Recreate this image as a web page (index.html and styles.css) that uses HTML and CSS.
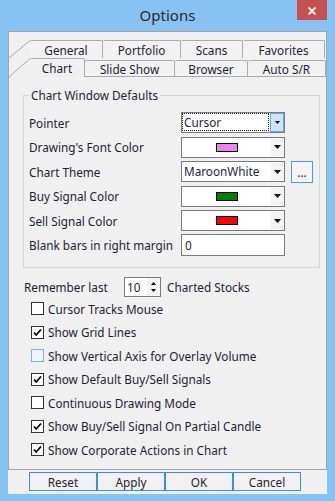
FILE: index.html
```html
<!DOCTYPE html>
<html>
<head>
<meta charset="utf-8">
<link rel="stylesheet" href="styles.css">
</head>
<body>
<div class="win">
  <div class="titlebar">
    <span class="title">Options</span>
    <div class="close"><svg width="8" height="8" viewBox="0 0 8 8"><path d="M0.5 0.5L7.5 7.5M7.5 0.5L0.5 7.5" stroke="#fff" stroke-width="1.8"/></svg></div>
  </div>
  <div class="client">
    <div class="tabctl">
      <div class="tabrow back">
        <svg class="slant" width="21" height="18" viewBox="0 0 21 18"><path d="M0 18L21 0.5" stroke="#acacac" stroke-width="1" fill="none"/></svg>
        <div class="tab w-general">General</div>
        <div class="tab w-portfolio">Portfolio</div>
        <div class="tab w-scans">Scans</div>
        <div class="tab w-fav">Favorites</div>
      </div>
      <div class="tabrow front">
        <svg class="slant" width="21" height="19" viewBox="0 0 21 19"><path d="M0 19L21 0.5" stroke="#acacac" stroke-width="1" fill="none"/></svg>
        <div class="tab sel w-chart">Chart</div>
        <div class="tab w-slide">Slide Show</div>
        <div class="tab w-browser">Browser</div>
        <div class="tab w-auto">Auto S/R</div>
      </div>
      <div class="page">
        <fieldset class="group">
          <legend>Chart Window Defaults</legend>
          <div class="rows">
            <div class="frow">
              <span class="lbl">Pointer</span>
              <div class="combo">
                <span class="focus">Cursor</span>
                <span class="dd-btn"><svg width="5" height="3" viewBox="0 0 5 3"><path d="M0 0H5L2.5 3Z" fill="#000"/></svg></span>
              </div>
            </div>
            <div class="frow">
              <span class="lbl">Drawing's Font Color</span>
              <div class="combo">
                <span class="swarea"><span class="swatch pink"></span></span>
                <span class="arrow"><svg width="7" height="4" viewBox="0 0 7 4"><path d="M0 0H7L3.5 4Z" fill="#000"/></svg></span>
              </div>
            </div>
            <div class="frow">
              <span class="lbl">Chart Theme</span>
              <div class="combo">
                <span class="ctext">MaroonWhite</span>
                <span class="arrow"><svg width="7" height="4" viewBox="0 0 7 4"><path d="M0 0H7L3.5 4Z" fill="#000"/></svg></span>
              </div>
              <div class="dots">...</div>
            </div>
            <div class="frow">
              <span class="lbl">Buy Signal Color</span>
              <div class="combo">
                <span class="swarea"><span class="swatch green"></span></span>
                <span class="arrow"><svg width="7" height="4" viewBox="0 0 7 4"><path d="M0 0H7L3.5 4Z" fill="#000"/></svg></span>
              </div>
            </div>
            <div class="frow">
              <span class="lbl">Sell Signal Color</span>
              <div class="combo">
                <span class="swarea"><span class="swatch red"></span></span>
                <span class="arrow"><svg width="7" height="4" viewBox="0 0 7 4"><path d="M0 0H7L3.5 4Z" fill="#000"/></svg></span>
              </div>
            </div>
            <div class="frow">
              <span class="lbl">Blank bars in right margin</span>
              <div class="textbox">0</div>
            </div>
          </div>
        </fieldset>
        <div class="remember">
          <span class="rlbl">Remember last</span>
          <div class="spin">
            <span class="spintext">10</span>
            <span class="spinbtns">
              <svg width="5" height="3" viewBox="0 0 5 3"><path d="M0 3H5L2.5 0Z" fill="#000"/></svg>
              <svg width="5" height="3" viewBox="0 0 5 3"><path d="M0 0H5L2.5 3Z" fill="#000"/></svg>
            </span>
          </div>
          <span class="after">Charted Stocks</span>
        </div>
        <div class="checks">
          <div class="chk"><span class="box"></span>Cursor Tracks Mouse</div>
          <div class="chk"><span class="box"><svg width="11" height="11" viewBox="0 0 11 11"><path d="M2 5.5L4.2 8L9 2.5" stroke="#000" stroke-width="1.8" fill="none"/></svg></span>Show Grid Lines</div>
          <div class="chk"><span class="box hover"></span>Show Vertical Axis for Overlay Volume</div>
          <div class="chk"><span class="box"><svg width="11" height="11" viewBox="0 0 11 11"><path d="M2 5.5L4.2 8L9 2.5" stroke="#000" stroke-width="1.8" fill="none"/></svg></span>Show Default Buy/Sell Signals</div>
          <div class="chk"><span class="box"></span>Continuous Drawing Mode</div>
          <div class="chk"><span class="box"><svg width="11" height="11" viewBox="0 0 11 11"><path d="M2 5.5L4.2 8L9 2.5" stroke="#000" stroke-width="1.8" fill="none"/></svg></span>Show Buy/Sell Signal On Partial Candle</div>
          <div class="chk"><span class="box"><svg width="11" height="11" viewBox="0 0 11 11"><path d="M2 5.5L4.2 8L9 2.5" stroke="#000" stroke-width="1.8" fill="none"/></svg></span>Show Corporate Actions in Chart</div>
        </div>
      </div>
    </div>
    <div class="buttons">
      <div class="btn">Reset</div>
      <div class="btn">Apply</div>
      <div class="btn">OK</div>
      <div class="btn">Cancel</div>
    </div>
  </div>
</div>
</body>
</html>
```

FILE: styles.css
```css
* { box-sizing: border-box; }
body {
  margin: 0;
  width: 335px;
  height: 501px;
  overflow: hidden;
  background: #88c2f3;
  font-family: "Noto Sans", "Open Sans", sans-serif;
  font-size: 11.75px;
  color: #1e1e34;
}
.win { width: 335px; height: 501px; display: flex; flex-direction: column; }
.titlebar {
  height: 31px;
  position: relative;
  display: flex;
  justify-content: center;
}
.title { font-size: 15px; line-height: 20px; margin-top: 5px; color: #2a2a2a; }
.close {
  position: absolute;
  right: 8px;
  top: 0;
  width: 30px;
  height: 20px;
  background: #c75050;
  display: flex;
  align-items: center;
  justify-content: center;
  padding-top: 2px;
}
.client {
  margin: 0 8px;
  height: 463px;
  background: #f0f0f0;
  display: flex;
  flex-direction: column;
}
.tabctl {
  height: 439px;
  border: 1px solid #a5a5a5;
  padding-top: 8px;
  display: flex;
  flex-direction: column;
}
.tabrow { display: flex; }
.back { height: 18px; }
.front { height: 19px; align-items: flex-end; }
.slant { flex: none; display: block; }
.tab {
  flex: none;
  display: flex;
  align-items: center;
  justify-content: center;
  border-top: 1px solid #acacac;
  border-right: 1px solid #acacac;
  border-radius: 2px 2px 0 0;
  background: #f2f2f2;
  line-height: 16px;
}
.back .tab { height: 18px; }
.front .tab { height: 17px; border-bottom: 1px solid #acacac; padding-top: 1px; }
.front .tab.sel { height: 19px; border-bottom: none; background: #f0f0f0; padding-top: 1px; padding-bottom: 1px; }
.w-general { width: 73px; }
.w-portfolio { width: 78px; }
.w-scans { width: 62px; }
.w-fav { width: 82px; }
.w-chart { width: 55px; }
.w-slide { width: 90px; }
.w-browser { width: 73px; }
.w-auto { width: 78px; }
.page { flex: 1; display: flex; flex-direction: column; }
.group {
  margin: 10px 6px 0 14px;
  border: 1px solid #d5d5d5;
  padding: 0 0 11px 5px;
  min-width: 0;
}
.group legend { padding: 0 2px; line-height: 16px; }
.rows { display: flex; flex-direction: column; gap: 3.6px; padding-top: 9px; }
.frow { display: flex; align-items: center; height: 21px; }
.lbl { width: 152px; flex: none; white-space: nowrap; }
.combo {
  width: 104px;
  height: 21px;
  border: 1px solid #7a7a7a;
  background: #fff;
  display: flex;
  flex: none;
}
.focus {
  flex: 1;
  margin: 0 1px 1px 0;
  border: 1px dotted #222;
  line-height: 16px;
  padding-left: 1px;
  color: #1b1b55;
}
.dd-btn {
  width: 14px;
  border: 1px solid #6aa8e6;
  background: #cde5fb;
  display: flex;
  align-items: center;
  justify-content: center;
}
.arrow {
  width: 13px;
  margin: 1px 0;
  background: #f3f3f3;
  display: flex;
  align-items: center;
  justify-content: center;
}
.swarea { flex: 1; display: flex; align-items: center; justify-content: center; }
.swatch { width: 22px; height: 9px; border: 1px solid #000; }
.pink { background: #ee82ee; }
.green { background: #008000; }
.red { background: #ff0000; }
.ctext { flex: 1; padding-left: 2px; line-height: 19px; color: #1b1b55; }
.dots {
  width: 22px;
  height: 22px;
  margin-left: 6px;
  border: 1px solid #4a9be8;
  background: #f4f4f4;
  display: flex;
  align-items: flex-end;
  justify-content: center;
  line-height: 14px;
  padding-bottom: 3px;
}
.textbox {
  width: 104px;
  height: 22px;
  border: 1px solid #7a7a7a;
  background: #fff;
  padding-left: 3px;
  line-height: 20px;
  color: #1b1b55;
}
.remember {
  margin: 9px 0 0 15px;
  height: 20px;
  display: flex;
  align-items: center;
}
.rlbl { width: 100px; flex: none; }
.spin {
  width: 37px;
  height: 20px;
  border: 1px solid #7a7a7a;
  background: #fff;
  display: flex;
}
.spintext { flex: 1; padding-left: 2px; line-height: 18px; color: #1b1b55; }
.spinbtns {
  width: 13px;
  background: #f3f3f3;
  display: flex;
  flex-direction: column;
  align-items: center;
  justify-content: space-around;
  padding: 2px 0;
}
.spinbtns svg { display: block; }
.after { margin-left: 6px; }
.checks { margin: 0 0 0 22px; display: flex; flex-direction: column; }
.chk { height: 23.5px; display: flex; align-items: center; }
.box {
  width: 13px;
  height: 13px;
  border: 1px solid #333;
  background: #fff;
  margin-right: 4px;
  display: flex;
  align-items: center;
  justify-content: center;
}
.box svg { display: block; }
.box.hover { border-color: #7fb3e6; background: #eef5fd; }
.buttons { display: flex; margin: 2px 0 0 21px; }
.btn {
  width: 68px;
  height: 19px;
  border: 1px solid #3d8de4;
  background: #f1f1f1;
  display: flex;
  align-items: center;
  justify-content: center;
  line-height: 16px;
}
```
